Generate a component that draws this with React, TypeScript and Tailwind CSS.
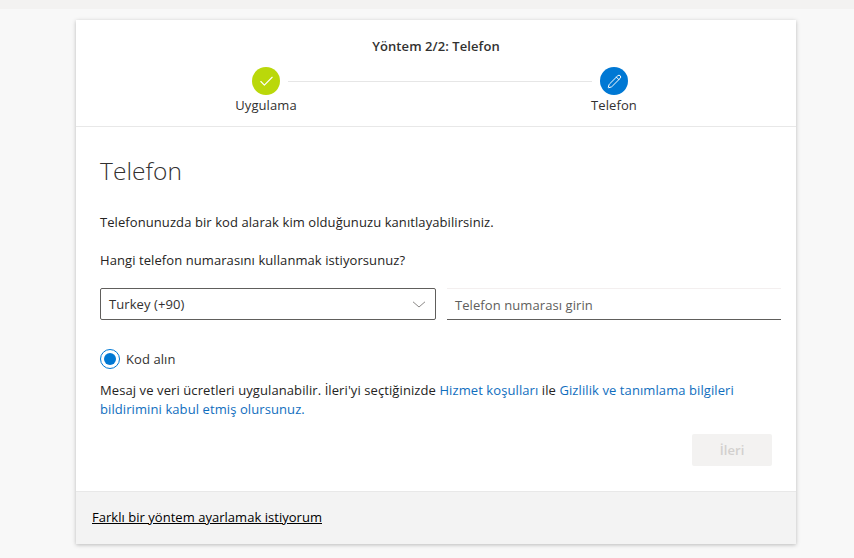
import { Check, Pencil } from "lucide-react";

const font = { fontFamily: '"Open Sans", "Noto Sans", sans-serif' };

function Step({ label, done }: { label: string; done?: boolean }) {
  return (
    <div className="flex w-7 flex-col items-center">
      <div
        className={
          done
            ? "flex h-7 w-7 shrink-0 items-center justify-center rounded-full bg-[#bad80a] text-white"
            : "flex h-7 w-7 shrink-0 items-center justify-center rounded-full bg-[#0078d4] text-white"
        }
      >
        {done ? <Check size={17} strokeWidth={1.6} /> : <Pencil size={15} strokeWidth={1.6} />}
      </div>
      <span className="mt-[1px] text-[13px] leading-[18px] whitespace-nowrap text-[#323130]">
        {label}
      </span>
    </div>
  );
}

export default function App() {
  return (
    <div
      className="flex h-[558px] w-[854px] flex-col overflow-hidden bg-[#f8f8f8] tracking-[0.08px]"
      style={font}
    >
      <div className="h-[9px] bg-[#f3f2f1]" />
      <main className="mt-[11px] ml-[76px] flex h-[524px] w-[720px] flex-col bg-white shadow-[0_1px_4px_rgba(0,0,0,0.25)]">
        <header className="flex h-[107px] flex-col items-center border-b border-[#e8e8e8] pt-[18px]">
          <h2 className="text-[13px] leading-[17px] font-semibold text-[#323130]">
            Yöntem 2/2: Telefon
          </h2>
          <div className="mt-[12px] ml-[8px] flex w-[376px] items-start">
            <Step label="Uygulama" done />
            <div className="mx-[8px] mt-[14px] h-px flex-1 bg-[#e6e6e6]" />
            <Step label="Telefon" />
          </div>
        </header>

        <section className="flex flex-1 flex-col pt-[26px] pr-[15px] pl-[24px]">
          <h1 className="text-[24.5px] leading-[36px] font-light text-[#323130]">Telefon</h1>
          <p className="mt-[24px] text-[13px] leading-[18px] text-[#252423]">
            Telefonunuzda bir kod alarak kim olduğunuzu kanıtlayabilirsiniz.
          </p>
          <p className="mt-[20px] text-[13px] leading-[18px] text-[#252423]">
            Hangi telefon numarasını kullanmak istiyorsunuz?
          </p>

          <div className="mt-[19px] flex gap-[11px]">
            <div className="flex h-8 w-[336px] items-center justify-between rounded-[2px] border border-[#605e5c] pr-[9px] pl-2 text-[13px] text-[#323130]">
              <span className="pt-[2px]">Turkey (+90)</span>
              <svg width="14" height="7" viewBox="0 0 14 7" fill="none" stroke="#8a8886" strokeWidth="1">
                <path d="M1 .8l6 5.2 6-5.2" />
              </svg>
            </div>
            <div className="flex h-8 flex-1 items-center border-t border-b border-t-[#f3efef] border-b-[#605e5c] pt-[3px] pl-2 text-[13px] text-[#605e5c]">
              Telefon numarası girin
            </div>
          </div>

          <label className="mt-[29px] flex items-center gap-[6px] text-[13px] leading-[20px] text-[#323130]">
            <span className="flex h-5 w-5 items-center justify-center rounded-full border border-[#0078d4]">
              <span className="h-[12px] w-[12px] rounded-full bg-[#0078d4]" />
            </span>
            Kod alın
          </label>

          <p className="mt-[12px] w-[650px] text-[13px] leading-[19px] tracking-[0.09px] text-[#252423]">
            Mesaj ve veri ücretleri uygulanabilir. İleri'yi seçtiğinizde{" "}
            <a className="text-[#106ebe]">Hizmet koşulları</a> ile{" "}
            <a className="text-[#106ebe]">Gizlilik ve tanımlama bilgileri</a>
            <br />
            <a className="text-[#106ebe]">bildirimini kabul etmiş olursunuz.</a>
          </p>

          <div className="mt-[15px] mr-[9px] flex justify-end">
            <button
              type="button"
              className="h-8 w-20 rounded-[2px] bg-[#f3f2f1] pt-[1px] text-[13px] font-semibold text-[#d2d0ce]"
            >
              İleri
            </button>
          </div>
        </section>

        <footer className="flex h-[53px] items-center border-t border-[#e8e8e8] bg-[#f3f3f3] pl-4">
          <a className="text-[13px] tracking-[0.03px] text-black underline">Farklı bir yöntem ayarlamak istiyorum</a>
        </footer>
      </main>
    </div>
  );
}
